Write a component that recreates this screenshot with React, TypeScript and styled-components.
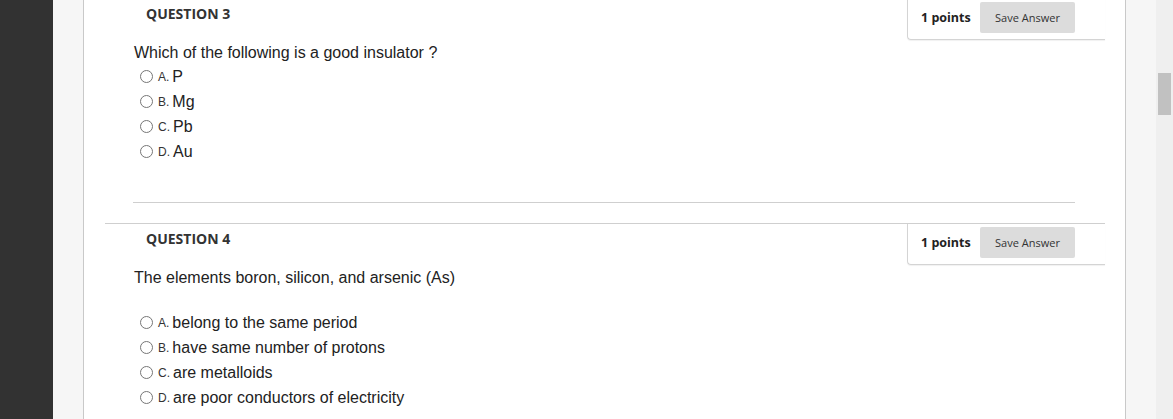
import React from "react";
import styled, { createGlobalStyle } from "styled-components";

const Global = createGlobalStyle`
  html, body { margin: 0; padding: 0; background: #fff; }
  body { font-family: "Liberation Sans", Arial, sans-serif; }
`;

const Shell = styled.div`
  display: flex;
  height: 419px;
  overflow: hidden;
`;

const Sidebar = styled.div`
  width: 53px;
  flex: none;
  background: #323232;
`;

const Gutter = styled.div`
  width: 30px;
  flex: none;
  background: #f6f6f6;
  border-right: 1px solid #c9c9c9;
`;

const Main = styled.main`
  flex: 1;
  min-width: 0;
  background: #fff;
  padding: 0 20px 0 21px;
  overflow: hidden;
`;

const RightRail = styled.div`
  width: 30px;
  flex: none;
  background: #f6f6f6;
  border-left: 1px solid #c9c9c9;
`;

const Scrollbar = styled.div`
  width: 17px;
  flex: none;
  background: #efefef;
  padding: 73px 2px 0 2px;
  box-sizing: border-box;
`;

const Thumb = styled.div`
  height: 42px;
  background: #c1c1c1;
`;

const List = styled.div`
  margin-top: -2px;
`;

const Question = styled.section`
  border-top: 1px solid #cfcfcf;
  margin-bottom: 20px;
`;

const Header = styled.div`
  display: flex;
  justify-content: space-between;
  align-items: flex-start;
`;

const Title = styled.h3`
  margin: 0;
  padding: 5px 0 0 41px;
  font-family: "Open Sans", sans-serif;
  font-weight: 700;
  font-size: 14px;
  line-height: 19px;
  color: #333;
`;

const PointsBox = styled.div`
  display: flex;
  align-items: center;
  justify-content: space-between;
  width: 198px;
  box-sizing: border-box;
  padding: 3px 30px 6px 13px;
  border-left: 1px solid #d4d4d4;
  border-bottom: 1px solid #d4d4d4;
  border-bottom-left-radius: 4px;
  box-shadow: 0 1px 1px rgba(0, 0, 0, 0.06);
`;

const Points = styled.span`
  font-family: "Open Sans", sans-serif;
  font-weight: 700;
  font-size: 12.5px;
  color: #222;
  white-space: nowrap;
`;

const SaveButton = styled.button`
  width: 95px;
  height: 31px;
  flex: none;
  border: 0;
  border-radius: 2px;
  background: #dcdcdc;
  font-family: "Open Sans", sans-serif;
  font-size: 11px;
  color: #333;
  padding: 0;
  cursor: pointer;
`;

const Body = styled.div<{ $bottom: number }>`
  margin: 0 30px 0 28px;
  padding-bottom: ${(p) => p.$bottom}px;
  border-bottom: 1px solid #cfcfcf;
`;

const Prompt = styled.p`
  margin: 3px 0 0 0;
  padding-left: 1px;
  font-size: 16px;
  line-height: 20px;
  color: #222;
`;

const Spacer = styled.div`
  height: 21px;
`;

const Options = styled.ul`
  list-style: none;
  margin: 1px 0 0 0;
  padding: 0 0 0 2px;
`;

const Option = styled.li`
  display: flex;
  align-items: center;
  height: 25px;
`;

const Radio = styled.input`
  width: 13px;
  height: 13px;
  margin: 0 5px 0 5px;
  flex: none;
`;

const Letter = styled.span`
  font-size: 12px;
  color: #333;
  margin-right: 3px;
`;

const Answer = styled.span`
  font-size: 16px;
  color: #222;
`;

type Q = {
  num: number;
  prompt: string;
  blank?: boolean;
  options: string[];
  bottom: number;
};

const questions: Q[] = [
  {
    num: 3,
    prompt: "Which of the following is a good insulator ?",
    options: ["P", "Mg", "Pb", "Au"],
    bottom: 38,
  },
  {
    num: 4,
    prompt: "The elements boron, silicon, and arsenic (As)",
    blank: true,
    options: [
      "belong to the same period",
      "have same number of protons",
      "are metalloids",
      "are poor conductors of electricity",
    ],
    bottom: 38,
  },
];

const letters = ["A.", "B.", "C.", "D."];

export default function App() {
  return (
    <>
      <Global />
      <Shell>
        <Sidebar />
        <Gutter />
        <Main>
          <List>
            {questions.map((q) => (
              <Question key={q.num}>
                <Header>
                  <Title>QUESTION {q.num}</Title>
                  <PointsBox>
                    <Points>1 points</Points>
                    <SaveButton type="button">Save Answer</SaveButton>
                  </PointsBox>
                </Header>
                <Body $bottom={q.bottom}>
                  <Prompt>{q.prompt}</Prompt>
                  {q.blank && <Spacer />}
                  <Options>
                    {q.options.map((o, i) => (
                      <Option key={o}>
                        <Radio type="radio" name={`q${q.num}`} />
                        <Letter>{letters[i]}</Letter>
                        <Answer>{o}</Answer>
                      </Option>
                    ))}
                  </Options>
                </Body>
              </Question>
            ))}
          </List>
        </Main>
        <RightRail />
        <Scrollbar>
          <Thumb />
        </Scrollbar>
      </Shell>
    </>
  );
}
